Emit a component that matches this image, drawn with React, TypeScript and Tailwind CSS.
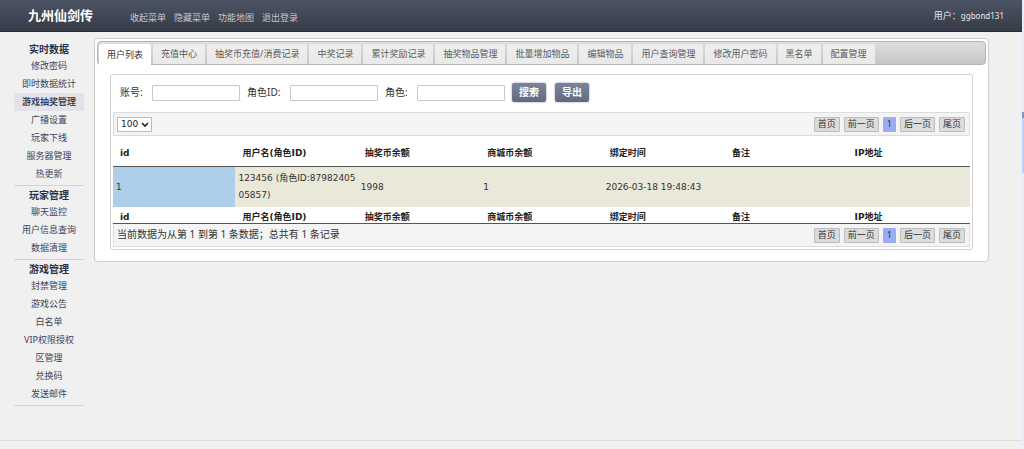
import clsx from "clsx";

const navLinks = ["收起菜单", "隐藏菜单", "功能地图", "退出登录"];

const menuGroups = [
  {
    title: "实时数据",
    items: [
      "修改密码",
      "即时数据统计",
      "游戏抽奖管理",
      "广播设置",
      "玩家下线",
      "服务器管理",
      "热更新",
    ],
  },
  { title: "玩家管理", items: ["聊天监控", "用户信息查询", "数据清理"] },
  {
    title: "游戏管理",
    items: [
      "封禁管理",
      "游戏公告",
      "白名单",
      "VIP权限授权",
      "区管理",
      "兑换码",
      "发送邮件",
    ],
  },
];

const activeItem = "游戏抽奖管理";

const tabs = [
  "用户列表",
  "充值中心",
  "抽奖币充值/消费记录",
  "中奖记录",
  "累计奖励记录",
  "抽奖物品管理",
  "批量增加物品",
  "编辑物品",
  "用户查询管理",
  "修改用户密码",
  "黑名单",
  "配置管理",
];

const columns = [
  "id",
  "用户名(角色ID)",
  "抽奖币余额",
  "商城币余额",
  "绑定时间",
  "备注",
  "IP地址",
];

const rows = [
  ["1", "123456 (角色ID:8798240505857)", "1998", "1", "2026-03-18 19:48:43", "", ""],
];

const fields = [
  { id: "account", label: "账号:", labelClass: "w-8" },
  { id: "roleId", label: "角色ID:", labelClass: "w-[43px]" },
  { id: "role", label: "角色:", labelClass: "w-8" },
];

const Header = () => (
  <header className="flex h-8 items-center border-b border-[#272a35] bg-linear-to-b from-[#4c5464] to-[#363b47] pl-7 pr-[18px] text-[9px] text-[#e6e8ec]">
    <h1 className="w-[102px] text-[13px] font-bold text-white">九州仙剑传</h1>
    <nav className="mt-1 flex gap-2 text-[#c3c7cf]">
      {navLinks.map((link) => (
        <a key={link} href="#">
          {link}
        </a>
      ))}
    </nav>
    <p className="ml-auto flex items-center">
      <span>用户：</span>
      <span className="text-[8px]">ggbond131</span>
    </p>
  </header>
);

const Sidebar = () => (
  <aside className="w-[70px] shrink-0 pt-1 text-center text-[#3c4459]">
    {menuGroups.map((group) => (
      <section key={group.title} className="mb-[2px] border-b border-[#d3d3d5] pb-[2px]">
        <h2 className="text-[10px] leading-[15px] font-bold text-[#2b3145]">
          {group.title}
        </h2>
        <ul className="text-[9px] leading-[18px]">
          {group.items.map((item) => (
            <li key={item}>
              <a
                href="#"
                className={clsx(
                  "block",
                  item === activeItem && "bg-[#e1e2ea] font-medium text-[#242a3d]"
                )}
              >
                {item}
              </a>
            </li>
          ))}
        </ul>
      </section>
    ))}
  </aside>
);

const TabBar = () => (
  <div
    role="tablist"
    className="flex h-6 items-end gap-[2px] rounded-sm border border-[#b4b4b4] bg-linear-to-b from-[#dedede] to-[#c6c6c6] px-px text-[9px]"
  >
    {tabs.map((tab, i) => (
      <button
        key={tab}
        type="button"
        role="tab"
        aria-selected={i === 0}
        className={clsx(
          "h-5 rounded-t-[3px] px-2 whitespace-nowrap",
          i === 0
            ? "-mb-px h-[21px] bg-white text-[#333]"
            : "bg-linear-to-b from-[#efefef] to-[#e9e9e9] text-[#5a5a5a]"
        )}
      >
        {tab}
      </button>
    ))}
  </div>
);

const SearchForm = () => (
  <form
    className="flex h-[37px] items-center px-[7px] pb-[2px] text-[10px] text-[#333]"
    onSubmit={(e) => e.preventDefault()}
  >
    {fields.map(({ id, label, labelClass }) => (
      <div key={id} className="mr-[7px] flex items-center">
        <label htmlFor={id} className={clsx("whitespace-nowrap", labelClass)}>
          {label}
        </label>
        <input
          id={id}
          type="text"
          className="h-4 w-[88px] rounded-[1px] border border-[#c8c8c8] bg-white px-1 outline-none"
        />
      </div>
    ))}
    {["搜索", "导出"].map((label) => (
      <button
        key={label}
        type="submit"
        className="mr-[9px] h-[19px] w-[34px] rounded-[2px] bg-linear-to-b from-[#7c849a] to-[#626a80] text-[10px] font-bold text-white shadow-[0_0_2px_#7a8194]"
      >
        {label}
      </button>
    ))}
  </form>
);

const Pager = () => (
  <div className="ml-auto flex gap-1 text-[9px] text-[#333]">
    {["首页", "前一页", "1", "后一页", "尾页"].map((label) => (
      <button
        key={label}
        type="button"
        className={clsx(
          "h-[15px] rounded-[1px] border px-[3px] leading-3",
          label === "1"
            ? "border-[#9badf0] bg-[#9badf0]"
            : "border-[#bcbcbc] bg-[#dcdcdc]"
        )}
      >
        {label}
      </button>
    ))}
  </div>
);

const HeadCells = ({ className }: { className: string }) => (
  <tr className={className}>
    {columns.map((column) => (
      <th
        key={column}
        scope="col"
        className="border-b border-[#555] pt-1 pl-[7px] leading-3 font-bold"
      >
        {column}
      </th>
    ))}
  </tr>
);

const UserTable = () => (
  <table className="w-full table-fixed border-separate border-spacing-0 text-left font-['DejaVu_Sans','Noto_Sans_CJK_SC',sans-serif] text-[9px] text-[#333]">
    <thead>
      <HeadCells className="h-[31px] text-[#222]" />
    </thead>
    <tbody>
      {rows.map((row) => (
        <tr key={row[0]} className="h-10 bg-[#eae8d8]">
          {row.map((cell, i) => (
            <td
              key={columns[i]}
              className={clsx(
                "py-[3px] pl-[3px] leading-[17px] break-all",
                i === 0 && "bg-[#aecfea]"
              )}
            >
              {cell}
            </td>
          ))}
        </tr>
      ))}
    </tbody>
    <tfoot>
      <HeadCells className="h-[17px] text-[#222]" />
    </tfoot>
  </table>
);

const UserList = () => (
  <div className="mx-[13px] mt-[9px] mb-[11px] rounded-[3px] border border-[#d2d2d2] p-[2px] pt-0">
    <SearchForm />
    <div className="flex h-6 items-center border border-[#dcdcdc] bg-[#f4f4f4] px-[3px] pr-1">
      <div className="relative flex">
        <select
          aria-label="每页条数"
          className="h-[15px] w-[35px] appearance-none border border-[#bbb] bg-white pl-[3px] font-['DejaVu_Sans',sans-serif] text-[9px] leading-3 text-[#222]"
        >
          <option>100</option>
        </select>
        <svg
          viewBox="0 0 8 6"
          className="pointer-events-none absolute top-[5px] right-[3px] h-[6px] w-2"
          fill="none"
          stroke="#222"
          strokeWidth="1.6"
        >
          <path d="M1 1l3 3 3-3" />
        </svg>
      </div>
      <Pager />
    </div>
    <UserTable />
    <div className="flex h-[23px] items-center border border-t-0 border-[#dcdcdc] bg-[#f4f4f4] px-[3px] pr-1">
      <p className="mb-[2px] text-[10px] leading-4 text-[#333]">
        当前数据为从第 1 到第 1 条数据；总共有 1 条记录
      </p>
      <Pager />
    </div>
  </div>
);

const App = () => (
  <div className="flex min-h-screen bg-[#f0f0f0] font-['Noto_Sans','Noto_Sans_CJK_SC',sans-serif]">
    <div className="flex min-w-0 flex-1 flex-col">
      <Header />
      <div className="flex flex-1 items-start pt-[6px] pr-[33px] pl-[14px]">
        <Sidebar />
        <main className="ml-[10px] min-w-0 flex-1 rounded-[4px] border border-[#cdcdcd] bg-white p-[2px] pb-0">
          <TabBar />
          <UserList />
        </main>
      </div>
      <footer className="h-[9px] border-t border-[#dcdcdc]" />
    </div>
    <div aria-hidden="true" className="flex w-[2px] flex-col bg-[#e6edf9] pt-28">
      <div className="h-[6px] bg-[#7d96cf]" />
      <div className="h-[55px] bg-[#bdd0f6]" />
    </div>
  </div>
);

export default App;
